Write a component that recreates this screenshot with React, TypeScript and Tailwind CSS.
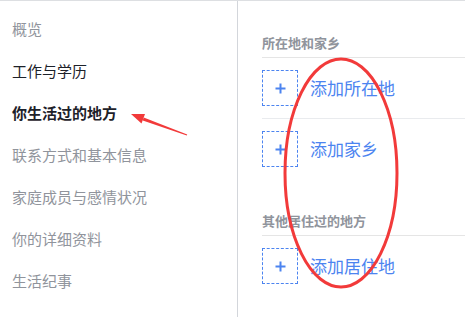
const menu = [
  { label: "概览", tone: "muted" },
  { label: "工作与学历", tone: "normal" },
  { label: "你生活过的地方", tone: "active" },
  { label: "联系方式和基本信息", tone: "muted" },
  { label: "家庭成员与感情状况", tone: "muted" },
  { label: "你的详细资料", tone: "muted" },
  { label: "生活纪事", tone: "muted" },
];

const sections = [
  { title: "所在地和家乡", rows: ["添加所在地", "添加家乡"] },
  { title: "其他居住过的地方", rows: ["添加居住地"] },
];

function AddRow({ label, last }: { label: string; last: boolean }) {
  return (
    <div
      className={`flex items-center gap-3 py-3 ${last ? "" : "border-b border-[#e9ebee]"}`}
    >
      <div className="flex h-9 w-9 shrink-0 items-center justify-center border border-dashed border-[#4c84f0]">
        <svg width="11" height="11" viewBox="0 0 11 11" aria-hidden>
          <path d="M5.5 0.5v10M0.5 5.5h10" stroke="#4c84f0" strokeWidth="2" />
        </svg>
      </div>
      <span className="text-[17px] leading-6 text-[#4c84f0]">{label}</span>
    </div>
  );
}

export default function App() {
  return (
    <div
      className="relative h-[317px] w-[465px] overflow-hidden border-t border-[#dddfe2] bg-white"
      style={{ fontFamily: '"Noto Sans CJK SC", "Noto Sans", sans-serif' }}
    >
      <div className="flex h-full">
        {/* left nav */}
        <nav className="w-[238px] shrink-0 border-r border-[#d3d6db] pt-[7px] pl-3">
          {menu.map((m) => (
            <div
              key={m.label}
              className={`flex h-[42px] items-center text-[15px] ${
                m.tone === "active"
                  ? "font-bold text-[#1d2129]"
                  : m.tone === "normal"
                    ? "text-[#1d2129]"
                    : "text-[#90949c]"
              }`}
            >
              {m.label}
            </div>
          ))}
        </nav>

        {/* places */}
        <div className="flex-1 pl-6">
          {sections.map((s) => (
            <section key={s.title}>
              <h3 className="border-b border-[#e5e5e5] pt-[33px] pb-[5px] text-[13px] leading-[18px] font-bold text-[#90949c]">
                {s.title}
              </h3>
              {s.rows.map((r, i) => (
                <AddRow key={r} label={r} last={i === s.rows.length - 1} />
              ))}
            </section>
          ))}
        </div>
      </div>

      {/* red annotations drawn over the screenshot */}
      <svg
        className="pointer-events-none absolute inset-0"
        width="465"
        height="317"
        viewBox="0 0 465 317"
        aria-hidden
      >
        <ellipse cx="341" cy="172" rx="56" ry="114" fill="none" stroke="#f23a3a" strokeWidth="3" />
        <polygon points="131,113 141.5,122.6 145,113" fill="#f23a3a" />
        <polygon points="142.7,119.6 143.7,116.6 187.2,133.4 186.8,134.4" fill="#f23a3a" />
      </svg>
    </div>
  );
}
